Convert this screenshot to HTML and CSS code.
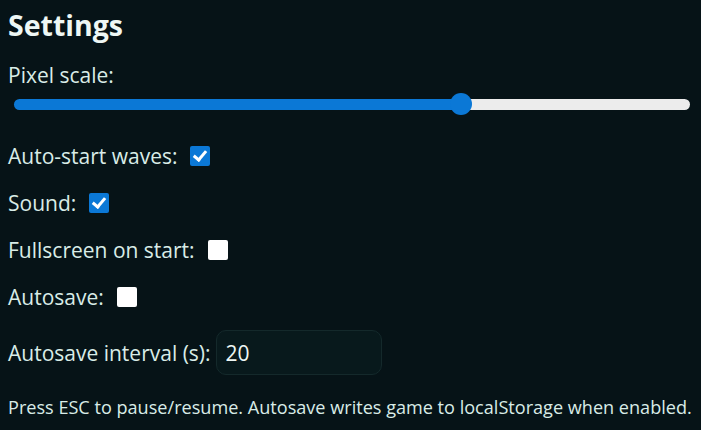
FILE: index.html
```html
<!DOCTYPE html>
<html lang="en">
<head>
  <meta charset="UTF-8" />
  <title>Settings</title>
  <meta name="viewport" content="width=device-width, initial-scale=1.0" />
  <link rel="stylesheet" href="styles.css">
</head>
<body>
  <div class="settings">
    <h2>Settings</h2>

    <label class="campo" for="escala">Pixel scale:</label>
    <input type="range" id="escala" class="slider" min="1" max="4" step="1" value="3">

    <div class="opciones">
      <label class="fila">Auto-start waves: <input type="checkbox" checked></label>
      <label class="fila">Sound: <input type="checkbox" checked></label>
      <label class="fila">Fullscreen on start: <input type="checkbox"></label>
      <label class="fila">Autosave: <input type="checkbox"></label>
    </div>

    <label class="fila intervalo">Autosave interval (s): <input type="number" class="numero" value="20"></label>

    <p class="nota">Press ESC to pause/resume. Autosave writes game to localStorage when enabled.</p>
  </div>
</body>
</html>
```

FILE: styles.css
```css
body {
  font-family: 'Open Sans', Lato, sans-serif;
  background: #061317;
  margin: 0;
  padding: 0 8px;
  color: #d9ece7;
}

.settings {
  display: flex;
  flex-direction: column;
}

h2 {
  margin: 0;
  font-size: 28.5px;
  font-weight: bold;
  line-height: 50px;
  color: #eef7f4;
}

.campo {
  margin-top: 8px;
  font-size: 21px;
  line-height: 34px;
}

.slider {
  -webkit-appearance: none;
  appearance: none;
  margin: 0 3px 0 6px;
  height: 24px;
  background: transparent;
  cursor: pointer;
}

.slider::-webkit-slider-runnable-track {
  height: 11px;
  border-radius: 6px;
  background: linear-gradient(to right, #0b78d6 66%, #ececec 66%);
}

.slider::-webkit-slider-thumb {
  -webkit-appearance: none;
  width: 22px;
  height: 22px;
  margin-top: -5.5px;
  border-radius: 50%;
  background: #0b78d6;
}

.opciones {
  margin-top: 16px;
  display: flex;
  flex-direction: column;
}

.fila {
  display: flex;
  align-items: center;
  gap: 13px;
  height: 47px;
  font-size: 21px;
}

.fila input[type="checkbox"] {
  -webkit-appearance: none;
  appearance: none;
  position: relative;
  margin: 0;
  width: 20px;
  height: 20px;
  border-radius: 2px;
  background: #ffffff;
  cursor: pointer;
}

.fila input[type="checkbox"]:checked {
  background: #0b78d6;
}

.fila input[type="checkbox"]:checked::after {
  content: "";
  position: absolute;
  left: 6px;
  top: 2px;
  width: 5px;
  height: 10px;
  border: solid #ffffff;
  border-width: 0 3px 3px 0;
  transform: rotate(40deg);
}

.intervalo {
  margin-top: 10px;
  height: 45px;
  gap: 5px;
}

.numero {
  width: 166px;
  height: 45px;
  box-sizing: border-box;
  padding: 0 9px;
  background: #08191c;
  border: 1px solid #14292b;
  border-radius: 10px;
  color: #eef7f4;
  font-family: inherit;
  font-size: 21px;
  -moz-appearance: textfield;
}

.numero::-webkit-inner-spin-button,
.numero::-webkit-outer-spin-button {
  -webkit-appearance: none;
  margin: 0;
}

.nota {
  margin: 20px 0 0;
  font-size: 18.1px;
  line-height: 24px;
  white-space: nowrap;
}
```
